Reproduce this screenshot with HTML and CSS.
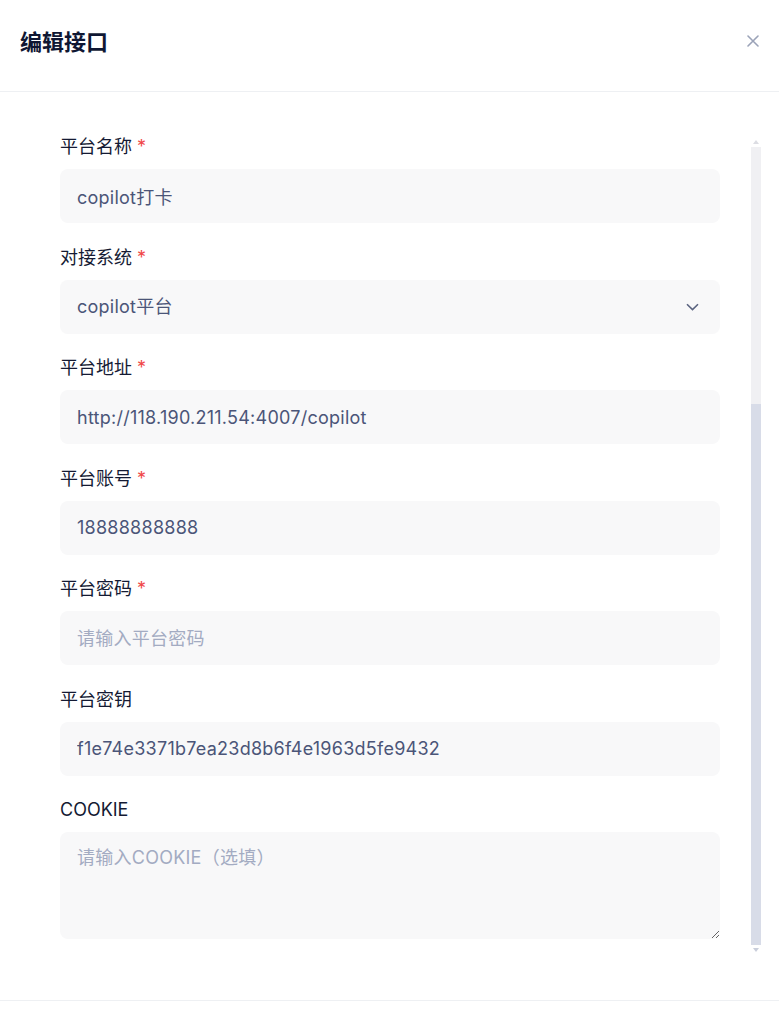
FILE: index.html
```html
<!DOCTYPE html>
<html>
<head>
<meta charset="utf-8">
<title>编辑接口</title>
<link rel="stylesheet" href="styles.css">
</head>
<body>
<div class="modal">
  <div class="modal-header">
    <h2 class="modal-title">编辑接口</h2>
    <button class="close-btn" aria-label="关闭">
      <svg width="12" height="12" viewBox="0 0 12 12"><path d="M1 1L11 11M11 1L1 11" stroke="currentColor" stroke-width="1.6" stroke-linecap="round"/></svg>
    </button>
  </div>

  <div class="modal-body">
    <form class="form">
      <div class="field">
        <label class="field-label">平台名称 <span class="required">*</span></label>
        <input class="field-input" type="text" value="copilot打卡">
      </div>
      <div class="field">
        <label class="field-label">对接系统 <span class="required">*</span></label>
        <select class="field-input field-select">
          <option>copilot平台</option>
        </select>
      </div>
      <div class="field">
        <label class="field-label">平台地址 <span class="required">*</span></label>
        <input class="field-input" type="text" value="http://118.190.211.54:4007/copilot">
      </div>
      <div class="field">
        <label class="field-label">平台账号 <span class="required">*</span></label>
        <input class="field-input" type="text" value="18888888888">
      </div>
      <div class="field">
        <label class="field-label">平台密码 <span class="required">*</span></label>
        <input class="field-input" type="password" placeholder="请输入平台密码">
      </div>
      <div class="field">
        <label class="field-label">平台密钥</label>
        <input class="field-input" type="text" value="f1e74e3371b7ea23d8b6f4e1963d5fe9432">
      </div>
      <div class="field">
        <label class="field-label">COOKIE</label>
        <textarea class="field-input field-textarea" placeholder="请输入COOKIE（选填）"></textarea>
      </div>
    </form>

    <!-- scroll indicator, form is scrolled to the bottom -->
    <div class="scrollbar">
      <div class="scrollbar-btn"><span class="arrow-up"></span></div>
      <div class="scrollbar-track">
        <div class="scrollbar-thumb"></div>
      </div>
      <div class="scrollbar-btn"><span class="arrow-down"></span></div>
    </div>
  </div>
</div>
</body>
</html>
```

FILE: styles.css
```css
html, body {
  margin: 0;
  height: 100%;
  overflow: hidden;
}

body {
  font-family: Inter, "Noto Sans CJK SC", sans-serif;
  background-color: #fff;
  color: #141a33;
}

.modal {
  display: flex;
  flex-direction: column;
  height: 100vh;
}

.modal-header {
  flex: none;
  height: 92px;
  padding: 28px 20px 0;
  box-sizing: border-box;
  display: flex;
  justify-content: space-between;
  align-items: flex-start;
  border-bottom: 1px solid #eef0f3;
}

.modal-title {
  margin: 0;
  font-size: 22px;
  line-height: 28px;
  font-weight: 700;
  color: #0f1733;
}

.close-btn {
  margin-top: 7px;
  padding: 0;
  border: none;
  background: none;
  color: #9ba3b8;
  cursor: pointer;
  display: flex;
}

.modal-body {
  flex: none;
  height: 909px;
  padding: 43px 18px 45px 60px;
  box-sizing: border-box;
  border-bottom: 1px solid #eef0f3;
  display: flex;
  gap: 31px;
}

.form {
  width: 660px;
  display: flex;
  flex-direction: column;
  gap: 22.5px;
}

.field {
  display: flex;
  flex-direction: column;
  gap: 10px;
}

.field-label {
  font-size: 18px;
  line-height: 24px;
  color: #141a33;
}

.required {
  color: #f04848;
}

.field-input {
  height: 54px;
  padding: 0 17px;
  border: none;
  border-radius: 8px;
  box-sizing: border-box;
  background-color: #f8f8f9;
  font-family: inherit;
  font-size: 18px;
  letter-spacing: 0.25px;
  color: #4b5578;
  outline: none;
}

.field-input::placeholder {
  color: #a3abc2;
}

.field-select {
  appearance: none;
  -webkit-appearance: none;
  background-image: url("data:image/svg+xml,%3Csvg width='13' height='8' viewBox='0 0 13 8' fill='none' xmlns='http://www.w3.org/2000/svg'%3E%3Cpath d='M1 1.2L6.5 6.6L12 1.2' stroke='%235b6480' stroke-width='1.6'/%3E%3C/svg%3E");
  background-repeat: no-repeat;
  background-position: right 21px center;
}

.field-textarea {
  height: 107px;
  padding: 14px 17px;
  line-height: 24px;
  resize: vertical;
}

.scrollbar {
  width: 10px;
  margin-top: 2px;
  display: flex;
  flex-direction: column;
}

.scrollbar-btn {
  height: 10px;
  display: flex;
  justify-content: center;
  align-items: center;
}

.arrow-up {
  border-left: 3.5px solid transparent;
  border-right: 3.5px solid transparent;
  border-bottom: 4px solid #dcdde3;
}

.arrow-down {
  border-left: 3.5px solid transparent;
  border-right: 3.5px solid transparent;
  border-top: 4px solid #c9cedb;
}

.scrollbar-track {
  flex: 1;
  background-color: #f0f0f3;
  display: flex;
  flex-direction: column;
  justify-content: flex-end;
}

.scrollbar-thumb {
  height: 541px;
  background-color: #d8dce8;
}
```
